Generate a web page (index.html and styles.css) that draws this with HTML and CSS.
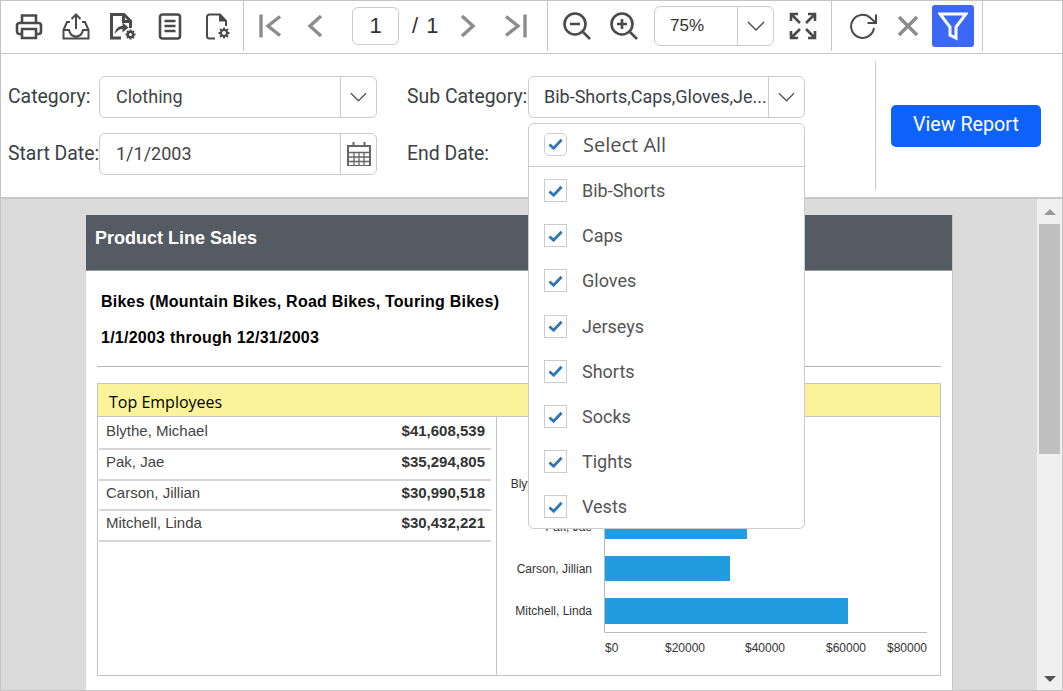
FILE: index.html
```html
<!DOCTYPE html>
<html lang="en">
<head>
<meta charset="utf-8">
<title>Product Line Sales</title>
<link rel="stylesheet" href="styles.css">
</head>
<body>
<div class="app">
  <div class="toolbar">
    <div class="group g-file">
      <button class="tb"><svg viewBox="0 0 30 30"><path d="M8 12V4.500h14V12M8 23H5.500A2.500 2.500 0 0 1 3 20.500V14.500A2.500 2.500 0 0 1 5.500 12h19a2.500 2.500 0 0 1 2.500 2.500v6a2.500 2.500 0 0 1-2.500 2.500H22M8 18h14v9H8z"/></svg></button>
      <button class="tb"><svg viewBox="0 0 30 30"><path class="thin" d="M15 3.500V18M10.500 8 15 3.500 19.500 8M9 11H6L2.500 19v8.500h25V19L24 11h-3M2.500 19H8c1 5 3.500 6.500 7 6.500s6-1.500 7-6.500h5.500"/></svg></button>
      <button class="tb"><svg viewBox="0 0 30 30"><path class="bold" d="M13 27H3.500V3.500h12.500l6.500 6.500v7M15.500 3.500V10.500H22.500"/><path class="fill" d="M6.500 23c1-5.500 4-8 8-8v-3.500l6 5-6 5V18c-3 0-5 1.500-8 5z"/><circle class="fat" cx="22.500" cy="23.500" r="2.700"/><path class="thin" d="M22.500 18.500v2M22.500 26.500v2M17.500 23.500h2M25.500 23.500h2M19 20l1.400 1.400M24.600 25.600 26 27M19 27l1.400-1.400M24.600 21.400 26 20"/></svg></button>
      <button class="tb"><svg viewBox="0 0 30 30"><rect x="5" y="3.500" width="20" height="24" rx="2.500"/><path d="M9.500 10h11M9.500 15h11M9.500 20h11"/></svg></button>
      <button class="tb"><svg viewBox="0 0 30 30"><path class="thin" d="M13 27.500H7.500A2.500 2.500 0 0 1 5 25V6a2.500 2.500 0 0 1 2.500-2.500H18l6 6.500v5"/><path class="fill" d="M17 3.500h1.500l6 7H17z"/><circle class="thin" cx="22" cy="22" r="3"/><path class="thin" d="M22 16.500v2.500M22 25v2.500M16.500 22H19M25 22h2.500M18 18l1.800 1.800M24.200 24.200 26 26M18 26l1.800-1.800M24.200 19.800 26 18"/></svg></button>
    </div>
    <div class="group g-nav">
      <button class="tb nav"><svg viewBox="0 0 30 30"><path class="gray" d="M6 3.500v23M25 5.500 13 15l12 9.500"/></svg></button>
      <button class="tb nav"><svg viewBox="0 0 30 30"><path class="gray" d="M21 5 10 15l11 10"/></svg></button>
      <div class="pagebox">1</div>
      <div class="pagetotal">/ 1</div>
      <button class="tb nav"><svg viewBox="0 0 30 30"><path class="gray" d="M9 5l11 10L9 25"/></svg></button>
      <button class="tb nav last"><svg viewBox="0 0 30 30"><path class="gray" d="M24 3.500v23M5 5.500 17 15 5 24.500"/></svg></button>
    </div>
    <div class="group g-zoom">
      <button class="tb"><svg viewBox="0 0 30 30"><circle cx="13" cy="13" r="10.500"/><path d="M8 13h10M21 21l7 7"/></svg></button>
      <button class="tb"><svg viewBox="0 0 30 30"><circle cx="13" cy="13" r="10.500"/><path d="M8 13h10M13 8v10M21 21l7 7"/></svg></button>
      <div class="zoombox"><span class="zoomval">75%</span><span class="zoomarrow"><svg viewBox="0 0 18 10"><path d="M1 1l8 8 8-8"/></svg></span></div>
      <button class="tb fit"><svg viewBox="0 0 30 30"><path d="M3 10V3h7M20 3h7v7M3 20v7h7M27 20v7h-7M4 4l8 8M26 4l-8 8M4 26l8-8M26 26l-8-8"/></svg></button>
    </div>
    <div class="group g-act">
      <button class="tb"><svg viewBox="0 0 30 30"><path class="thin" d="M25 17a11.500 11.500 0 1 1-3.500-10L27 12M27 3.500V12h-8.500"/></svg></button>
      <button class="tb close"><svg viewBox="0 0 30 30"><path class="gray" d="M6 6l18 18M24 6 6 24"/></svg></button>
      <button class="filter"><svg viewBox="0 0 30 30"><path d="M2 3h26L18 16v11l-6-3v-8z"/></svg></button>
    </div>
  </div>

  <div class="params">
    <div class="form">
      <label class="lbl">Category:</label>
      <div class="field"><span class="val">Clothing</span><span class="fbtn"><svg class="chev" viewBox="0 0 18 10"><path d="M1 1l8 8 8-8"/></svg></span></div>
      <label class="lbl lbl2">Sub Category:</label>
      <div class="field"><span class="val sub">Bib-Shorts,Caps,Gloves,Je...</span><span class="fbtn"><svg class="chev" viewBox="0 0 18 10"><path d="M1 1l8 8 8-8"/></svg></span></div>
      <label class="lbl">Start Date:</label>
      <div class="field"><span class="val">1/1/2003</span><span class="fbtn"><svg class="cal" viewBox="0 0 24 24"><path d="M1 4h22v20H1z"/><path class="cal-lines" d="M1 10.500h22M1 15h22M1 19.500h22M7 10v14M12 10v14M17 10v14"/><path class="cal-pins" d="M6.500 0v5M17.500 0v5"/></svg></span></div>
      <label class="lbl lbl2">End Date:</label>
      <div></div>
    </div>
    <div class="action"><button class="view">View Report</button></div>
  </div>

  <div class="viewer">
    <div class="canvas">
      <div class="page">
        <div class="rhead">Product Line Sales</div>
        <div class="rsub">
          <p>Bikes (Mountain Bikes, Road Bikes, Touring Bikes)</p>
          <p>1/1/2003 through 12/31/2003</p>
        </div>
        <div class="panel">
          <div class="panelhead">Top Employees</div>
          <div class="panelbody">
            <div class="tablecol">
              <div class="row"><span>Blythe, Michael</span><b>$41,608,539</b></div>
              <div class="row"><span>Pak, Jae</span><b>$35,294,805</b></div>
              <div class="row"><span>Carson, Jillian</span><b>$30,990,518</b></div>
              <div class="row"><span>Mitchell, Linda</span><b>$30,432,221</b></div>
            </div>
            <svg class="chart" viewBox="497 417 443 258">
              <rect class="bar" x="605" y="473" width="170" height="26"/>
              <rect class="bar" x="605" y="514" width="142" height="25"/>
              <rect class="bar" x="605" y="556" width="125" height="25"/>
              <rect class="bar" x="605" y="598" width="243" height="26"/>
              <path class="axis" d="M604.500 460V632.500H927"/>
              <text x="592" y="488" text-anchor="end">Blythe, Michael</text>
              <text x="592" y="531" text-anchor="end">Pak, Jae</text>
              <text x="592" y="573" text-anchor="end">Carson, Jillian</text>
              <text x="592" y="615" text-anchor="end">Mitchell, Linda</text>
              <text x="605" y="652">$0</text>
              <text x="685" y="652" text-anchor="middle">$20000</text>
              <text x="765" y="652" text-anchor="middle">$40000</text>
              <text x="846" y="652" text-anchor="middle">$60000</text>
              <text x="927" y="652" text-anchor="end">$80000</text>
            </svg>
          </div>
        </div>
      </div>
    </div>
    <div class="scrollbar">
      <span class="arrow up"></span>
      <div class="track"><div class="thumb"></div></div>
      <span class="arrow down"></span>
    </div>
  </div>

  <div class="dropdown">
    <div class="ditem head"><span class="cb round"><svg viewBox="0 0 16 12"><path d="M1.500 6.500 6 10.500 14.500 1.500"/></svg></span><span class="dtext selall">Select All</span></div>
    <div class="dlist">
      <div class="ditem"><span class="cb"><svg viewBox="0 0 16 12"><path d="M1.500 6.500 6 10.500 14.500 1.500"/></svg></span><span class="dtext">Bib-Shorts</span></div>
      <div class="ditem"><span class="cb"><svg viewBox="0 0 16 12"><path d="M1.500 6.500 6 10.500 14.500 1.500"/></svg></span><span class="dtext">Caps</span></div>
      <div class="ditem"><span class="cb"><svg viewBox="0 0 16 12"><path d="M1.500 6.500 6 10.500 14.500 1.500"/></svg></span><span class="dtext">Gloves</span></div>
      <div class="ditem"><span class="cb"><svg viewBox="0 0 16 12"><path d="M1.500 6.500 6 10.500 14.500 1.500"/></svg></span><span class="dtext">Jerseys</span></div>
      <div class="ditem"><span class="cb"><svg viewBox="0 0 16 12"><path d="M1.500 6.500 6 10.500 14.500 1.500"/></svg></span><span class="dtext">Shorts</span></div>
      <div class="ditem"><span class="cb"><svg viewBox="0 0 16 12"><path d="M1.500 6.500 6 10.500 14.500 1.500"/></svg></span><span class="dtext">Socks</span></div>
      <div class="ditem"><span class="cb"><svg viewBox="0 0 16 12"><path d="M1.500 6.500 6 10.500 14.500 1.500"/></svg></span><span class="dtext">Tights</span></div>
      <div class="ditem"><span class="cb"><svg viewBox="0 0 16 12"><path d="M1.500 6.500 6 10.500 14.500 1.500"/></svg></span><span class="dtext">Vests</span></div>
    </div>
  </div>
</div>
</body>
</html>
```

FILE: styles.css
```css
* { box-sizing: border-box; }
html, body { margin: 0; padding: 0; background: #fff; }
body { font-family: Roboto, "Liberation Sans", sans-serif; color: #333; }
button { font: inherit; border: 0; background: none; padding: 0; margin: 0; }

.app {
  position: relative;
  width: 1063px;
  height: 691px;
  border: 1px solid #c4c4c4;
  overflow: hidden;
  display: flex;
  flex-direction: column;
}

/* toolbar */
.toolbar {
  height: 53px;
  flex: none;
  display: flex;
  align-items: stretch;
  border-bottom: 1px solid #c8c8c8;
  padding-bottom: 2px;
}
.group {
  display: flex;
  align-items: center;
  flex: none;
  border-right: 1px solid #c8c8c8;
}
.g-file { width: 243px; padding-left: 4px; }
.g-nav { width: 304px; padding-left: 3px; }
.g-zoom { width: 284px; padding-left: 5px; }
.g-act { width: 151px; padding-left: 8px; }

.tb {
  width: 47px;
  height: 46px;
  flex: none;
  display: flex;
  align-items: center;
  justify-content: center;
}
.tb svg { width: 30px; height: 30px; }
.tb svg path, .tb svg circle, .tb svg rect {
  fill: none;
  stroke: #4a4a4a;
  stroke-width: 2.600;
}
.tb svg .thin { stroke-width: 2; }
.tb svg .bold { stroke-width: 3; }
.tb svg .fat { stroke-width: 2.400; }
.tb svg .fill { fill: #4a4a4a; stroke: none; }
.tb svg .gray { stroke: #8c8c8c; stroke-width: 3.400; }

.nav { width: 45px; }
.nav.last { margin-left: 3px; }
.pagebox {
  width: 47px;
  height: 38px;
  flex: none;
  margin-left: 15px;
  border: 1px solid #ccc;
  border-radius: 6px;
  font-size: 22px;
  line-height: 36px;
  text-align: center;
  color: #333;
  font-family: "Liberation Sans", sans-serif;
}
.pagetotal {
  width: 46px;
  flex: none;
  padding-left: 13px;
  font-size: 22px;
  word-spacing: 2px;
  color: #333;
  font-family: "Liberation Sans", sans-serif;
}
.zoombox {
  width: 120px;
  height: 40px;
  flex: none;
  margin-left: 7px;
  border: 1px solid #ccc;
  border-radius: 6px;
  display: flex;
  align-items: center;
}
.zoomval {
  flex: 1;
  padding-left: 15px;
  font-size: 17px;
  color: #333;
  font-family: "Liberation Sans", sans-serif;
}
.zoomarrow {
  width: 36px;
  height: 38px;
  border-left: 1px solid #ccc;
  display: flex;
  align-items: center;
  justify-content: center;
}
.zoomarrow svg { width: 18px; height: 10px; fill: none; stroke: #555; stroke-width: 1.500; }
.fit { width: 57px; }
.close { width: 41px; }
.filter {
  width: 42px;
  height: 42px;
  flex: none;
  margin-left: 4px;
  background: #3b68f6;
  border-radius: 3px;
  display: flex;
  align-items: center;
  justify-content: center;
}
.filter svg { width: 30px; height: 30px; fill: none; stroke: #fff; stroke-width: 3; }

/* parameters */
.params {
  height: 145px;
  flex: none;
  display: flex;
  border-bottom: 2px solid #c8c8c8;
  padding: 7px 0 7px 7px;
}
.form {
  width: 797px;
  flex: none;
  display: grid;
  grid-template-columns: 91px 278px 151px 277px;
  grid-template-rows: 42px 42px;
  row-gap: 15px;
  padding-top: 15px;
  align-items: center;
}
.lbl { font-size: 19.400px; color: #3a3f44; white-space: nowrap; padding-bottom: 1px; }
.lbl2 { padding-left: 30px; }
.field {
  height: 42px;
  border: 1px solid #ccc;
  border-radius: 6px;
  display: flex;
  align-items: center;
}
.val {
  flex: 1;
  min-width: 0;
  padding: 0 0 2px 16px;
  font-size: 18px;
  color: #444;
  white-space: nowrap;
}
.val.sub { color: #3a4048; padding-left: 15px; }
.fbtn {
  width: 36px;
  height: 40px;
  flex: none;
  border-left: 1px solid #ccc;
  display: flex;
  align-items: center;
  justify-content: center;
}
.chev { width: 17px; height: 10px; fill: none; stroke: #555; stroke-width: 1.400; }
.cal { width: 24px; height: 24px; }
.cal path { fill: none; stroke: #666; stroke-width: 2; }
.cal .cal-lines { stroke-width: 1.300; }
.action {
  flex: 1;
  margin-left: 70px;
  border-left: 1px solid #ccc;
  padding: 44px 0 0 15px;
}
.view {
  width: 150px;
  height: 42px;
  padding-bottom: 3px;
  background: #0d62fb;
  color: #fff;
  font-size: 19.700px;
  border-radius: 5px;
}

/* viewer */
.viewer {
  flex: 1;
  min-height: 0;
  display: flex;
  background: #dbdbdb;
}
.canvas {
  flex: 1;
  min-width: 0;
  padding: 16px 0 0 85px;
  overflow: hidden;
}
.page {
  width: 867px;
  height: 480px;
  background: #fff;
  border-right: 1px solid #c8c8c8;
  font-family: "Liberation Sans", sans-serif;
}
.rhead {
  height: 56px;
  background: #555b63;
  border-bottom: 1px solid #999;
  color: #fff;
  font-weight: bold;
  font-size: 18px;
  line-height: 46px;
  padding-left: 9px;
}
.rsub {
  margin: 0 11px;
  height: 96px;
  padding-top: 22px;
  border-bottom: 1px solid #b5b5b5;
  color: #000;
  font-weight: bold;
  font-size: 16px;
  letter-spacing: 0.240px;
}
.rsub p { margin: 0 0 18px 4px; line-height: 18px; }
.panel {
  margin: 16px 11px 0;
  width: 844px;
  height: 293px;
  border: 1px solid #c4c4c4;
}
.panelhead {
  height: 33px;
  background: #faf39a;
  border-bottom: 1px solid #c4c4c4;
  color: #000;
  font-family: "Open Sans", sans-serif;
  font-size: 16px;
  line-height: 36px;
  padding-left: 11px;
}
.panelbody { display: flex; height: 258px; }
.tablecol {
  width: 399px;
  flex: none;
  border-right: 1px solid #c4c4c4;
  padding: 0 5px 0 1px;
}
.row {
  height: 30.700px;
  border-bottom: 2px solid #d6d6d6;
  display: flex;
  justify-content: space-between;
  padding: 3px 6px 0 7px;
  font-size: 15px;
  line-height: 17px;
  color: #444;
}
.row:first-child { height: 33px; padding-top: 5px; }
.row b { color: #333; }
.chart { width: 443px; height: 258px; display: block; flex: none; }
.chart text { font-size: 12px; font-family: "Liberation Sans", sans-serif; fill: #333; }
.bar { fill: #219ce0; }
.axis { fill: none; stroke: #bbb; stroke-width: 1; }

/* scrollbar */
.scrollbar {
  width: 25px;
  flex: none;
  background: #f0f0f0;
  display: flex;
  flex-direction: column;
  align-items: center;
}
.track { flex: 1; width: 21px; }
.thumb { width: 21px; height: 230px; background: #c0c0c0; }
.arrow { width: 0; height: 0; border-left: 6px solid transparent; border-right: 6px solid transparent; flex: none; }
.arrow.up { border-bottom: 6px solid #999; margin: 10px 0 9px; }
.arrow.down { border-top: 6px solid #555; margin: 8px 0 8px; }

/* dropdown overlay */
.dropdown {
  position: absolute;
  left: 527px;
  top: 122px;
  width: 277px;
  height: 406px;
  background: #fff;
  border: 1px solid #ccc;
  border-radius: 6px;
}
.dlist { padding-top: 1px; }
.ditem {
  display: flex;
  align-items: center;
  height: 45.200px;
  padding-left: 15px;
}
.ditem.head {
  height: 43px;
  padding-bottom: 2px;
  border-bottom: 1px solid #ccc;
}
.cb {
  width: 23px;
  height: 23px;
  flex: none;
  border: 1px solid #ccc;
  display: flex;
  align-items: center;
  justify-content: center;
  background: #fff;
}
.cb.round { border-radius: 5px; }
.cb svg { width: 15px; height: 12px; fill: none; stroke: #2e76b8; stroke-width: 3; }
.dtext { margin-left: 15px; font-size: 18px; color: #555; }
.dtext.selall { font-size: 20px; margin-left: 16px; font-family: "Open Sans", sans-serif; color: #4f4f4f; }
```
